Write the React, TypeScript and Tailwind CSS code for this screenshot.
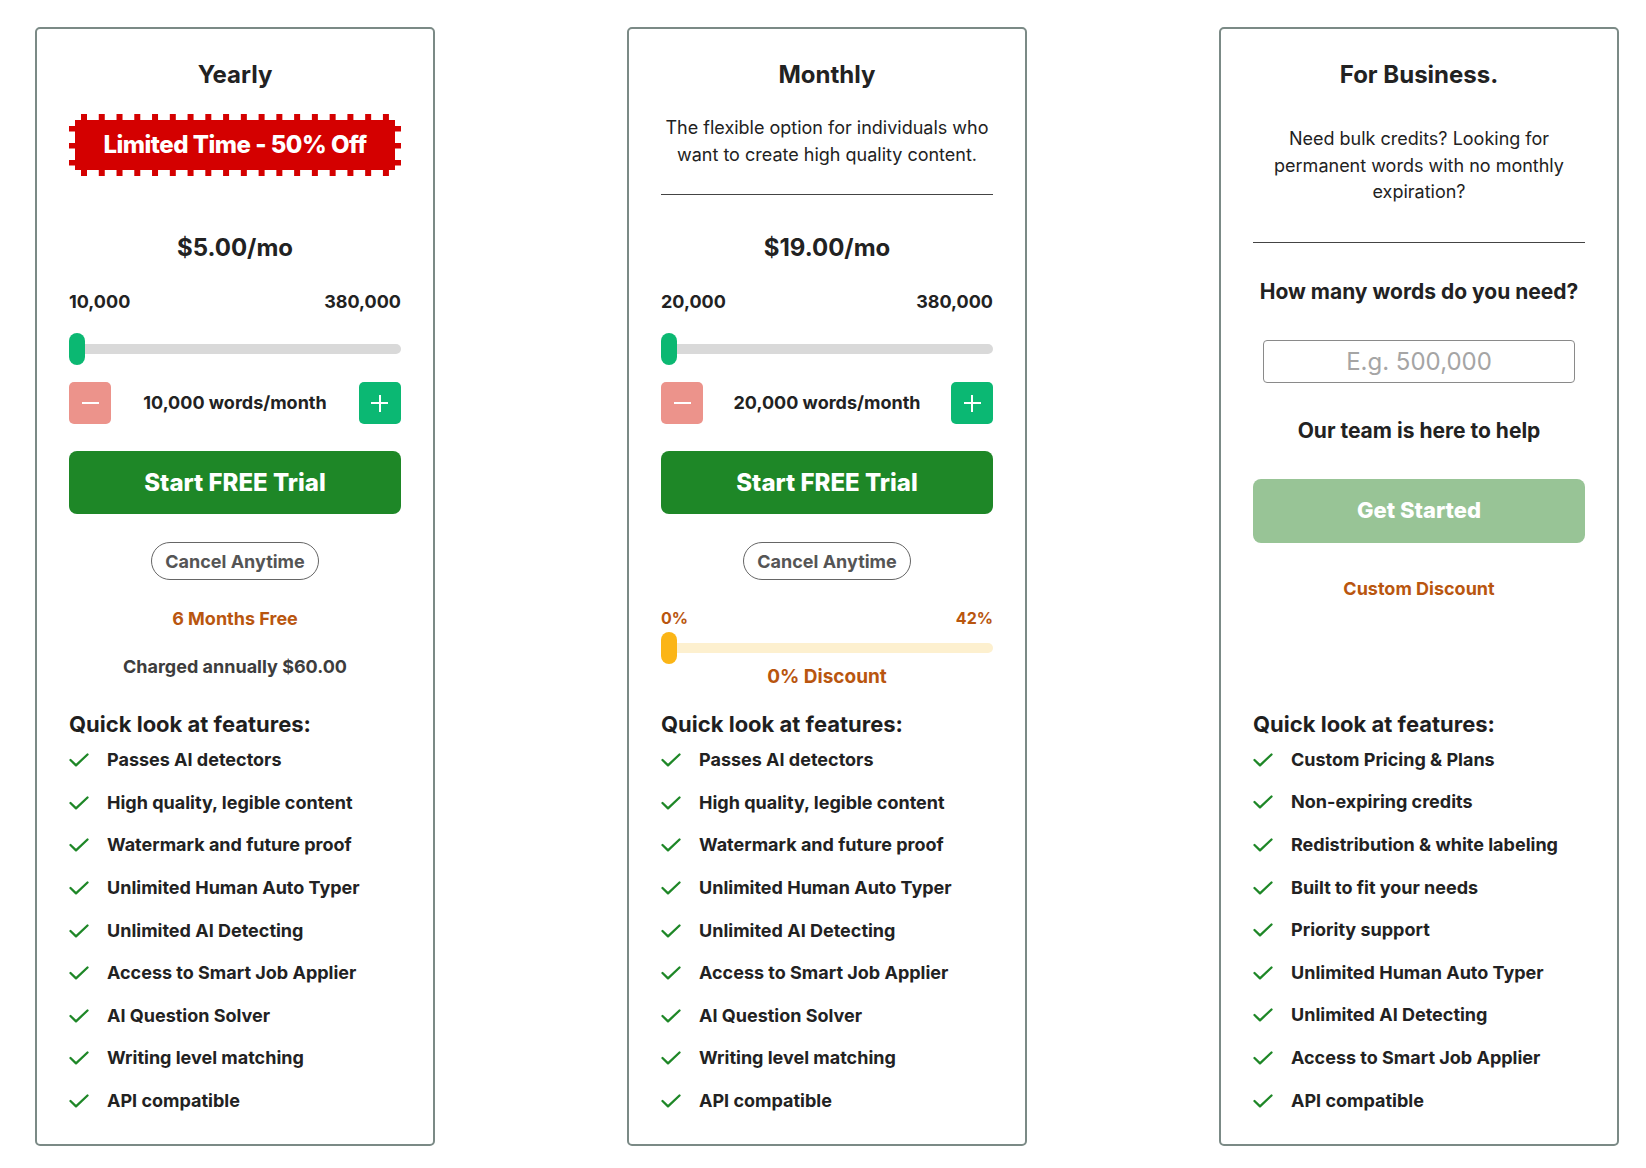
import React from 'react';

const font = { fontFamily: 'Inter, "Noto Sans", sans-serif' };

const yearlyFeatures = [
  'Passes AI detectors',
  'High quality, legible content',
  'Watermark and future proof',
  'Unlimited Human Auto Typer',
  'Unlimited AI Detecting',
  'Access to Smart Job Applier',
  'AI Question Solver',
  'Writing level matching',
  'API compatible',
];

const businessFeatures = [
  'Custom Pricing & Plans',
  'Non-expiring credits',
  'Redistribution & white labeling',
  'Built to fit your needs',
  'Priority support',
  'Unlimited Human Auto Typer',
  'Unlimited AI Detecting',
  'Access to Smart Job Applier',
  'API compatible',
];

const Check = () => (
  <svg width="20" height="14" viewBox="0 0 20 14" fill="none" className="shrink-0">
    <polyline points="1.5,7 7,12.3 18.5,1.5" stroke="#1e8727" strokeWidth="2.3" strokeLinecap="round" strokeLinejoin="round" />
  </svg>
);

const Features = ({ items }: { items: string[] }) => (
  <div>
    <h3 className="text-[22px] leading-[30px] font-bold text-[#1f1f1f]">Quick look at features:</h3>
    <ul>
      {items.map((f) => (
        <li key={f} className="flex items-center h-[42.6px]">
          <Check />
          <span className="ml-[18px] text-[18px] leading-[28px] font-bold text-[#222]">{f}</span>
        </li>
      ))}
    </ul>
  </div>
);

// postage stamp style badge
const StampBadge = () => {
  const top = Array.from({ length: 18 }, (_, i) => 12 + i * 17.76);
  const side = [12, 29, 46];
  return (
    <div className="relative mt-[23px] h-[62px] w-full flex items-center justify-center">
      <svg className="absolute inset-0" width="332" height="62" viewBox="0 0 332 62">
        <rect x="6" y="6" width="320" height="50" fill="#d40000" />
        {top.map((x) => (
          <React.Fragment key={x}>
            <rect x={x} y="0" width="6" height="6" fill="#d40000" />
            <rect x={x} y="56" width="6" height="6" fill="#d40000" />
          </React.Fragment>
        ))}
        {side.map((y) => (
          <React.Fragment key={y}>
            <rect x="0" y={y} width="6" height="5.5" fill="#d40000" />
            <rect x="326" y={y} width="6" height="5.5" fill="#d40000" />
          </React.Fragment>
        ))}
      </svg>
      <span className="relative text-white text-[24px] leading-[32px] font-extrabold tracking-[-0.5px]">Limited Time - 50% Off</span>
    </div>
  );
};

const WordPicker = ({ min, label }: { min: string; label: string }) => (
  <>
    <div className="mt-[24px] flex justify-between text-[18px] leading-[28px] font-bold text-[#222]">
      <span>{min}</span>
      <span>380,000</span>
    </div>
    <div className="mt-[17px] h-[32px] relative flex items-center">
      <div className="w-full h-[10px] rounded-full bg-[#d9d9d9]" />
      <div className="absolute left-0 top-0 w-[16px] h-[32px] rounded-full bg-[#0bb872]" />
    </div>
    <div className="mt-[17px] flex items-center justify-between">
      <button className="w-[42px] h-[42px] rounded-[5px] bg-[#ec938b] flex items-center justify-center">
        <span className="block w-[17px] h-[2.5px] bg-white" />
      </button>
      <span className="text-[18px] leading-[28px] font-bold text-[#222]">{label}</span>
      <button className="w-[42px] h-[42px] rounded-[5px] bg-[#0bb873] flex items-center justify-center relative">
        <span className="block w-[17px] h-[2.5px] bg-white" />
        <span className="absolute block w-[2.5px] h-[17px] bg-white" />
      </button>
    </div>
    <button className="mt-[27px] w-full h-[63px] rounded-[8px] bg-[#1e8727] text-white text-[24px] font-extrabold">
      Start FREE Trial
    </button>
    <div className="mt-[28px] flex justify-center">
      <span className="h-[38px] px-[13px] flex items-center rounded-full border border-[#666] text-[18px] font-bold text-[#555]">
        Cancel Anytime
      </span>
    </div>
  </>
);

const Card = ({ children }: { children: React.ReactNode }) => (
  <div className="w-[400px] border-2 border-[#7b8a86] rounded-[5px] px-[32px] pt-[30px] pb-[22px] flex flex-col justify-between">
    {children}
  </div>
);

export default function App() {
  return (
    <div className="min-h-screen bg-white text-[#222]" style={font}>
      <div className="flex gap-[192px] pl-[35px] pt-[27px]">
        <Card>
          <div>
            <h2 className="text-center text-[24px] leading-[32px] font-bold text-[#222]">Yearly</h2>
            <StampBadge />
            <div className="mt-[56px] text-center text-[24px] leading-[32px] font-bold text-[#222]">$5.00/mo</div>
            <WordPicker min="10,000" label="10,000 words/month" />
            <div className="mt-[25px] text-center text-[18px] leading-[28px] font-bold text-[#b9560f]">6 Months Free</div>
            <div className="mt-[20px] text-center text-[18px] leading-[28px] font-bold text-[#3d3d3d]">Charged annually $60.00</div>
            <div className="mt-[28px]">
              <Features items={yearlyFeatures} />
            </div>
          </div>
        </Card>

        <Card>
          <div>
            <h2 className="text-center text-[24px] leading-[32px] font-bold text-[#222]">Monthly</h2>
            <p className="mt-[23px] text-center text-[18px] leading-[27px] text-[#222]">
              The flexible option for individuals who want to create high quality content.
            </p>
            <div className="mt-[26px] h-px bg-[#444]" />
            <div className="mt-[37px] text-center text-[24px] leading-[32px] font-bold text-[#222]">$19.00/mo</div>
            <WordPicker min="20,000" label="20,000 words/month" />
            <div className="mt-[26px] flex justify-between text-[16px] leading-[24px] font-bold text-[#b9560f]">
              <span>0%</span>
              <span>42%</span>
            </div>
            <div className="mt-[2px] h-[32px] relative flex items-center">
              <div className="w-full h-[10px] rounded-full bg-[#fdf0cf]" />
              <div className="absolute left-0 top-0 w-[16px] h-[32px] rounded-full bg-[#fbb516]" />
            </div>
            <div className="text-center text-[19px] leading-[26px] font-bold text-[#b9560f]">0% Discount</div>
            <div className="mt-[19px]">
              <Features items={yearlyFeatures} />
            </div>
          </div>
        </Card>

        <Card>
          <div>
            <h2 className="text-center text-[24px] leading-[32px] font-bold text-[#222]">For Business.</h2>
            <p className="mt-[35px] text-center text-[18px] leading-[26.5px] text-[#222]">
              Need bulk credits? Looking for<br />
              permanent words with no monthly<br />
              expiration?
            </p>
            <div className="mt-[36px] h-px bg-[#444]" />
            <div className="mt-[35px] text-center text-[21px] leading-[28px] font-bold text-[#222]">How many words do you need?</div>
            <div className="mt-[34px] mx-[10px]">
              <input
                placeholder="E.g. 500,000"
                className="w-full h-[43px] rounded-[4px] border border-[#8a8a8a] text-center text-[24px] placeholder:text-[#a5a5a5] outline-none"
              />
            </div>
            <div className="mt-[34px] text-center text-[21px] leading-[28px] font-bold text-[#222]">Our team is here to help</div>
            <button className="mt-[34px] w-full h-[64px] rounded-[8px] bg-[#98c496] text-white text-[22px] font-extrabold">
              Get Started
            </button>
            <div className="mt-[32px] text-center text-[18px] leading-[28px] font-bold text-[#b9560f]">Custom Discount</div>
            <div className="mt-[106px]">
              <Features items={businessFeatures} />
            </div>
          </div>
        </Card>
      </div>
    </div>
  );
}
